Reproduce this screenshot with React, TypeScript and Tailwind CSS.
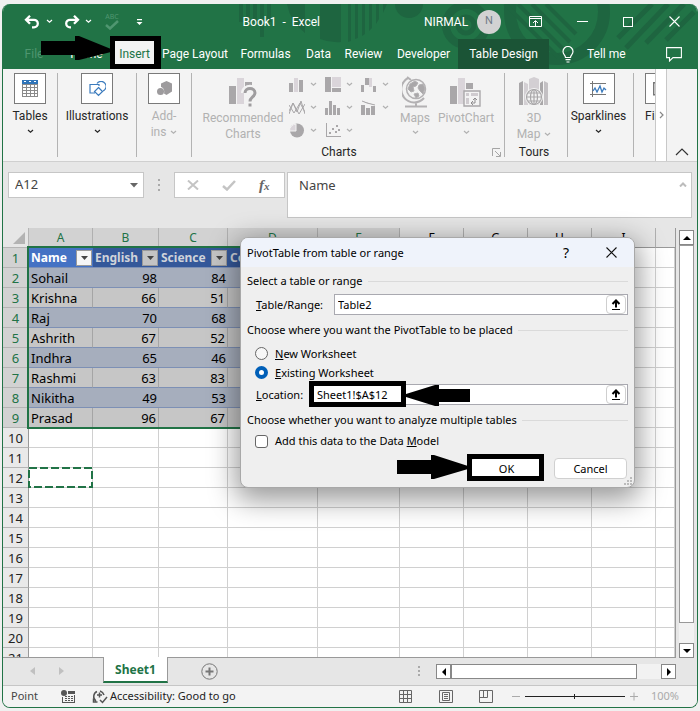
import React from "react";

const UI = "font-['Roboto','Noto_Sans',sans-serif]";

function Chevron({ className = "" }: { className?: string }) {
  return (
    <svg width="7" height="5" viewBox="0 0 7 5" className={className} fill="none" stroke="currentColor" strokeWidth="1.2">
      <path d="M1 1l2.500 2.300L6 1" />
    </svg>
  );
}

function TitlePattern() {
  return (
    <svg className="absolute right-0 top-0 h-[65px] w-[460px]" viewBox="237 4 460 65" fill="#1e6540">
      <path d="M239 4h4v18h-4zM246 4h4v18h-4zM253 4h4v18h-4zM260 4h4v33h-4zM267 4h4v18h-4z" />
      <path d="M287 4h18v29a47 47 0 0 1-18-29zM320 4h21v38a47 47 0 0 1-21-3z" />
      <path d="M348 4h3v37l-3 1zM355 4h3v34l-3 1zM362 4h3v30l-3 2zM369 4h3v24l-3 3zM376 4h3v15l-3 5zM383 4h4l-4 9z" />
      <path d="M395 4h28a14 14 0 0 1-28 0z" />
      <g fill="none" stroke="#1e6540">
        <circle cx="466" cy="25" r="20" strokeWidth="8" />
        <circle cx="466" cy="25" r="8" strokeWidth="5" />
        <circle cx="557" cy="12" r="47" strokeWidth="12" />
        <path d="M505 4l53 53M518 4l46 46M532 4l38 38M546 4l30 30" strokeWidth="4" />
        <path d="M652 4l-34 34M668 4l-42 44M684 4l-38 39M694 12l-28 28" strokeWidth="5" />
      </g>
    </svg>
  );
}

function TitleBar() {
  return (
    <div className="relative flex h-[35px] items-center text-white">
      <button aria-label="Undo" className="ml-[21px] w-4">
        <svg width="16" height="14" viewBox="0 0 16 14" fill="none" stroke="currentColor" strokeWidth="2.300">
          <path d="M6 .800L2 4.800l4 4M2 4.800h8a3.800 3.800 0 0 1 0 7.600H8" />
        </svg>
      </button>
      <button aria-label="Undo options" className="ml-[6px]"><Chevron /></button>
      <button aria-label="Redo" className="ml-[11px] w-4">
        <svg width="16" height="14" viewBox="0 0 16 14" fill="none" stroke="currentColor" strokeWidth="2.300">
          <path d="M10 .800l4 4-4 4M14 4.800H6a3.800 3.800 0 0 0 0 7.600h1" />
        </svg>
      </button>
      <button aria-label="Redo options" className="ml-[5px]"><Chevron /></button>
      <button aria-label="Spelling" className="ml-[13px] flex w-[14px] flex-col items-center text-[#4f9670]">
        <span className="text-[7px] leading-[7px]">ABC</span>
        <svg width="14" height="10" viewBox="0 0 14 10" fill="none" stroke="currentColor" strokeWidth="2.500"><path d="M1 5l4 3.500L13 1" /></svg>
      </button>
      <button aria-label="Customize toolbar" className="ml-[17px]">
        <svg width="7" height="8" viewBox="0 0 7 8" fill="currentColor"><path d="M1 1h5v1.200H1zM.500 4h6l-3 3z" /></svg>
      </button>
      <div className={`ml-auto mr-[104px] whitespace-pre text-xs ${UI}`}>Book1  -  Excel</div>
      <div className={`w-[44px] text-xs ${UI}`}>NIRMAL</div>
      <div className={`ml-[9px] flex size-6 items-center justify-center rounded-full bg-[#d2d2d2] text-[11px] text-[#707a86] ${UI}`}>N</div>
      <button aria-label="Ribbon display options" className="ml-7">
        <svg width="13" height="11" viewBox="0 0 13 11" fill="none" stroke="currentColor"><path d="M.500.500h12v10H.500zM.500 2.500h12M6.500 10V5M4 7l2.500-2.500L9 7" /></svg>
      </button>
      <button aria-label="Minimize" className="ml-[35px] h-3 w-[11px]"><span className="block h-px w-full bg-white" /></button>
      <button aria-label="Maximize" className="ml-[35px] size-[10px] border border-white" />
      <button aria-label="Close" className="ml-9 mr-[17px]">
        <svg width="11" height="11" viewBox="0 0 11 11" stroke="currentColor" strokeWidth="1.100"><path d="M.500.500l10 10M10.500.500l-10 10" /></svg>
      </button>
    </div>
  );
}

function Tabs() {
  const tab = "h-full shrink-0 text-center whitespace-nowrap";
  return (
    <nav className={`relative flex h-[30px] items-center text-xs text-white ${UI}`}>
      <button className={`${tab} ml-3 w-[38px] text-[#4f9670]`}>File</button>
      <button className={`${tab} w-[60px] pl-[7px]`}>Home</button>
      <div className="h-full w-[46px] bg-black pb-[3px] pl-[2px]">
        <button className="h-full w-[39px] bg-[#f3f3f3] pt-[2px] text-[#217346]">Insert</button>
      </div>
      <button className={`${tab} w-[72px]`}>Page Layout</button>
      <button className={`${tab} w-[69px]`}>Formulas</button>
      <button className={`${tab} w-[37px]`}>Data</button>
      <button className={`${tab} w-[53px]`}>Review</button>
      <button className={`${tab} w-[67px]`}>Developer</button>
      <button className={`${tab} ml-px w-[91px] bg-[#1b5436]`}>Table Design</button>
      <button className="ml-[13px] flex h-full items-center gap-[13px]">
        <svg width="12" height="17" viewBox="0 0 12 17" fill="none" stroke="currentColor" strokeWidth="1.200">
          <path d="M3.500 11.500C3.500 9 1 8.500 1 5.500a5 5 0 0 1 10 0c0 3-2.500 3.500-2.500 6zM3.500 13.700h5M4.500 16h3" />
        </svg>
        Tell me
      </button>
      <button aria-label="Comments" className="ml-auto mr-[15px]">
        <svg width="16" height="15" viewBox="0 0 16 15" fill="none" stroke="currentColor" strokeWidth="1.100"><path d="M.600.600h14.800v10H7L3.500 14v-3.400H.600z" /></svg>
      </button>
    </nav>
  );
}

const boxed = "flex h-[31px] w-8 items-center justify-center border border-[#7a7a7a] bg-white";
const group = "my-1 h-[84px] shrink-0 border-r border-[#b3b3b3]";

function SmallChart({ name, dark, light, children }: { name: string; dark?: string; light?: string; children?: React.ReactNode }) {
  return (
    <button aria-label={name} disabled className="flex h-[23px] w-9 items-center gap-[5px]">
      <svg width="16" height="15" viewBox="0 0 16 15" fill="#a9a7a9" className="shrink-0">
        {light && <path d={light} fill="#dad5da" />}
        {dark && <path d={dark} />}
        {children}
      </svg>
      <Chevron className="shrink-0" />
    </button>
  );
}

function Ribbon() {
  const label = "leading-4";
  return (
    <div className={`flex h-[93px] border-b border-[#cfcfcf] bg-[#f3f3f3] text-xs text-[#262626] ${UI}`}>
      <div className="flex min-w-0 flex-1 overflow-hidden">
        <div className={`${group} w-[55px]`}>
          <button className="flex w-full flex-col items-center">
            <span className={boxed}>
              <svg width="16" height="17" viewBox="0 0 16 17"><path d="M0 0h16v17H0z" fill="#8a8a8a" /><path d="M0 0h16v4H0z" fill="#2f74b8" /><path d="M2 1h2v1H2zM7 1h2v1H7zM12 1h2v1h-2z" fill="#fff" /><path d="M1 5h3v2H1zM5 5h3v2H5zM9 5h3v2H9zM13 5h2v2h-2zM1 8h3v2H1zM5 8h3v2H5zM9 8h3v2H9zM13 8h2v2h-2zM1 11h3v2H1zM5 11h3v2H5zM9 11h3v2H9zM13 11h2v2h-2zM1 14h3v2H1zM5 14h3v2H5zM9 14h3v2H9zM13 14h2v2h-2z" fill="#fff" /></svg>
            </span>
            <span className={`mt-[4px] ${label}`}>Tables</span>
            <Chevron className="mt-[5px]" />
          </button>
        </div>
        <div className={`${group} w-[79px]`}>
          <button className="flex w-full flex-col items-center">
            <span className={boxed}>
              <svg width="17" height="16" viewBox="0 0 17 16" fill="none" stroke="#3b7bbd" strokeWidth="1.200"><path d="M6 12H1V3.500h9V5M8 2.500A5 5 0 1 1 14 10M9.500 6.500l4 4-4 4-4-4z" /></svg>
            </span>
            <span className={`mt-[4px] ${label}`}>Illustrations</span>
            <Chevron className="mt-[5px]" />
          </button>
        </div>
        <div className={`${group} w-[55px]`}>
          <button disabled className="flex w-full flex-col items-center text-[#b1b1b1]">
            <span className={boxed}>
              <svg width="15" height="15" viewBox="0 0 15 15" fill="#9d9b9d"><path d="M9.500 0L15 2.500v8L9.500 14 7 12.500C8 9 6 6.500 4 6V2.500z" /><circle cx="3.500" cy="10.500" r="3.500" /></svg>
            </span>
            <span className={`mt-[4px] ${label}`}>Add-</span>
            <span className={`flex items-center gap-1 ${label}`}>ins <Chevron /></span>
          </button>
        </div>
        <div className={`${group} w-[313px]`}>
          <div className="flex h-[74px] pl-[9px] text-[#b1b1b1]">
            <button disabled className="flex w-[84px] flex-col items-center pt-1">
              <svg width="28" height="30" viewBox="0 0 28 30"><path d="M0 9h7v18H0zM16 5h7v6h-7z" fill="#a9a7a9" /><path d="M8 1h7v26H8z" fill="#dad5da" /><path d="M15 16c0-7 12-7 12 0 0 4-6 4-6 9M19.500 27.500h3" stroke="#f3f3f3" strokeWidth="6" fill="none" /><path d="M16 16c0-6 10-6 10 0 0 4-5 4-5 8.500M19.500 28h3" stroke="#9f9d9f" strokeWidth="3" fill="none" /></svg>
              <span className={`mt-[3px] ${label}`}>Recommended</span>
              <span className={label}>Charts</span>
            </button>
            <div className="ml-[4px] grid w-[108px] grid-cols-3 content-start">
              <SmallChart name="Column chart" dark="M0 6h4v9H0zM10 3h4v12h-4z" light="M5 1h4v14H5z" />
              <SmallChart name="Hierarchy chart" dark="M0 0h6v15H0zM7 11h9v4H7z" light="M7 0h9v10H7z" />
              <SmallChart name="Waterfall chart" dark="M0 8h3v7H0zM4 1h4v7H4zM12 9h3v6h-3z" light="M8 1h3v9H8z" />
              <SmallChart name="Line chart"><path d="M0 14L4 3l4 9 4-11 4 13M0 5l5 8 6-10 5 9M0 11l4-8 6 11 6-10" fill="none" stroke="#a9a7a9" /></SmallChart>
              <SmallChart name="Statistic chart" dark="M0 8h3v7H0zM4 1h3v14H4zM8 5h3v10H8zM12 8h3v7h-3z" />
              <SmallChart name="Combo chart" dark="M0 5h4v10H0zM5 8h4v7H5zM10 6h4v9h-4z"><path d="M1 1l5 2 8 2" stroke="#a9a7a9" /></SmallChart>
              <SmallChart name="Pie chart"><circle cx="8" cy="7.500" r="7" /><path d="M7 8V1a7 7 0 0 0-6.500 7z" fill="#dad5da" stroke="#f3f3f3" /></SmallChart>
              <SmallChart name="Scatter chart" dark="M1 0h1v13h14v1H1zM4 9h2v2H4zM7 5h2v2H7zM10 8h2v2h-2zM13 6h2v2h-2zM11 2h2v2h-2z" />
            </div>
            <button disabled className="flex w-9 flex-col items-center pt-[3px]">
              <svg width="26" height="32" viewBox="0 0 26 32" fill="none" stroke="#b3b1b3"><circle cx="14" cy="13" r="9.500" strokeWidth="1.500" /><path d="M8 8l5-3 3 2-2 3-3 1 1 4-3 1-3-3zM17 9l4-1 2 4-2 6-3-3-2-3zM12 18l4-1 1 3-3 2z" fill="#a9a7a9" /><path d="M6 2a13 13 0 1 0 16 20M5 1l4 3M14 26v4M3 30.500h22" strokeWidth="2" /></svg>
              <span className={`mt-[2px] ${label}`}>Maps</span>
              <Chevron className="mt-1" />
            </button>
            <button disabled className="ml-[4px] flex w-[58px] flex-col items-center pt-1">
              <svg width="34" height="30" viewBox="0 0 34 30"><path d="M1 9h7v18H1zM17 6h7v6h-7z" fill="#a9a7a9" /><path d="M9 1h7v26H9z" fill="#dad5da" /><path d="M15 14h16v15H15z" fill="#f3f3f3" stroke="#a9a7a9" strokeWidth="1.400" /><path d="M17 16h3v3h-3zM22 16h7v3h-7zM17 21h3v6h-3z" fill="#cfcbcf" /><path d="M22 26h4v-5M24 23l2-2 2 2M24 24l-2 2 2 2" fill="none" stroke="#8f8d8f" /></svg>
              <span className={`mt-[3px] ${label}`}>PivotChart</span>
              <Chevron className="mt-1" />
            </button>
          </div>
          <div className="flex h-[10px] items-center">
            <span className="flex-1 text-center leading-[14px]">Charts</span>
            <button aria-label="Charts dialog" className="w-[18px] pl-[6px]">
              <svg width="9" height="9" viewBox="0 0 9 9" fill="none" stroke="#a5a5a5"><path d="M.500 8V.500H8M3 3l5 5M8.500 4v4.500H4" /></svg>
            </button>
          </div>
        </div>
        <div className={`${group} w-[63px] pr-[4px]`}>
          <button disabled className="flex h-[74px] w-full flex-col items-center pt-1 text-[#b1b1b1]">
            <svg width="30" height="30" viewBox="0 0 30 30"><path d="M0 6l4-2v24H0zM21 6l3-2v24h-3z" fill="#a9a7a9" /><path d="M5 5l4 2v21H5zM10 2l5-2 5 2v26H10z" fill="#d3cfd3" /><path d="M25 4l4 2v22h-4z" fill="#c3c0c3" /><circle cx="15" cy="20" r="9" fill="#f3f3f3" /><g fill="none" stroke="#a9a7a9" strokeWidth="1.200"><circle cx="15" cy="20" r="7.500" /><ellipse cx="15" cy="20" rx="3.500" ry="7.500" /><path d="M7.500 20h15M9 16h12M9 24h12M15 12.500v15" /></g></svg>
            <span className={`mt-[3px] ${label}`}>3D</span>
            <span className={`flex items-center gap-1 ${label}`}>Map <Chevron /></span>
          </button>
          <div className="flex h-[10px] items-center justify-center leading-[14px]">Tours</div>
        </div>
        <div className={`${group} w-[66px] pr-[4px]`}>
          <button className="flex w-full flex-col items-center">
            <span className={boxed}>
              <svg width="17" height="16" viewBox="0 0 17 16" fill="none"><path d="M0 2.500h16M0 13.500h16M2.500 0v16" stroke="#777" /><path d="M3 10l2-3 2 4 3-6 2 6 2-4 2 2" stroke="#3b7bbd" strokeWidth="1.300" /></svg>
            </span>
            <span className={`mt-[4px] ${label}`}>Sparklines</span>
            <Chevron className="mt-[5px]" />
          </button>
        </div>
        <div className="my-1 w-12 shrink-0 pl-[11px]">
          <button className="flex flex-col items-start">
            <span className={`${boxed} justify-start pl-[7px]`}>
              <svg width="16" height="14" viewBox="0 0 16 14" fill="none" stroke="#777" strokeWidth="1.500"><path d="M.700.700h14v12H.700z" /></svg>
            </span>
            <span className={`mt-[4px] ${label}`}>Filters</span>
          </button>
        </div>
      </div>
      <button aria-label="Scroll ribbon" className="flex w-3 items-center justify-center border-x border-[#c8c8c8] bg-white text-[#888]">
        <svg width="5" height="8" viewBox="0 0 5 8" fill="none" stroke="currentColor" strokeWidth="1.200"><path d="M1 1l3 3-3 3" /></svg>
      </button>
      <button aria-label="Collapse ribbon" className="flex w-[30px] items-end justify-center pb-[5px]">
        <svg width="14" height="8" viewBox="0 0 14 8" fill="none" stroke="#333" strokeWidth="1.200"><path d="M1 7l6-6 6 6" /></svg>
      </button>
    </div>
  );
}

function FormulaBar() {
  return (
    <div className="flex h-[66px] items-start pl-[5px] pr-[5px] pt-[10px] text-[13px] text-[#444] font-['Noto_Sans',sans-serif]">
      <div className="flex h-[26px] w-[136px] items-center border border-[#c6c6c6] bg-white pr-[5px]">
        <input aria-label="Name Box" defaultValue="A12" className="min-w-0 flex-1 bg-transparent pl-[6px] outline-none" />
        <button aria-label="Name list"><svg width="8" height="5" viewBox="0 0 8 5" fill="#666"><path d="M0 0h8L4 4.500z" /></svg></button>
      </div>
      <div className="ml-[14px] flex h-[26px] w-[2px] flex-col justify-center gap-[3px]">
        <i className="size-[2px] bg-[#aaa]" /><i className="size-[2px] bg-[#aaa]" /><i className="size-[2px] bg-[#aaa]" />
      </div>
      <div className="ml-[14px] flex h-[26px] w-[111px] items-center border border-[#c6c6c6] bg-white">
        <button aria-label="Cancel entry" className="ml-3"><svg width="12" height="10" viewBox="0 0 12 10" stroke="#c4c4c4" strokeWidth="2"><path d="M1 .500l10 9M11 .500l-10 9" /></svg></button>
        <button aria-label="Enter" className="ml-[23px]"><svg width="14" height="11" viewBox="0 0 14 11" fill="none" stroke="#c4c4c4" strokeWidth="2.500"><path d="M1 6l4 3.500L13 1" /></svg></button>
        <button aria-label="Insert function" className="ml-[23px] font-['Liberation_Serif',serif] text-[15px] font-bold italic leading-5 text-[#666]">f<span className="text-[11px]">x</span></button>
      </div>
      <div className="ml-[2px] flex h-[46px] min-w-0 flex-1 border border-[#c6c6c6] bg-white">
        <textarea aria-label="Formula Bar" defaultValue="Name" className="min-w-0 flex-1 resize-none bg-transparent pl-[11px] pt-[3px] leading-[18px] outline-none" />
        <svg width="8" height="5" viewBox="0 0 8 5" fill="none" stroke="#bcbcbc" strokeWidth="2" className="mr-1 mt-[9px]"><path d="M1 4.500l3-3 3 3" /></svg>
      </div>
    </div>
  );
}

const columns = ["A", "B", "C", "D", "E", "F", "G", "H", "I", ""];
const records: [string, number, number][] = [
  ["Sohail", 98, 84], ["Krishna", 66, 51], ["Raj", 70, 68], ["Ashrith", 67, 52],
  ["Indhra", 65, 46], ["Rashmi", 63, 83], ["Nikitha", 49, 53], ["Prasad", 96, 67],
];
const fields = ["Name", "English", "Science", "Co", ""];

function Cell({ row, col }: { row: number; col: number }) {
  const base = "h-5 overflow-hidden whitespace-nowrap border-b p-0 leading-[18px]";
  if (col < 5 && row === 1) {
    return (
      <td className={`${base} border-[#7d90b5] ${col === 0 ? "bg-[#4472c4] text-white" : "bg-[#34589a] text-[#cfd3da]"}`}>
        <div className="flex items-center justify-between pl-[2px] pr-px pt-px text-xs font-bold">
          <span>{fields[col]}</span>
          <button aria-label={`Filter column ${columns[col]}`} className={`flex size-4 shrink-0 items-center justify-center border border-[#9a9a9a] ${col === 0 ? "bg-[#f6f6f6]" : "bg-[#c4c4c4]"}`}>
            <svg width="7" height="4" viewBox="0 0 7 4" fill="#444"><path d="M0 0h7L3.500 4z" /></svg>
          </button>
        </div>
      </td>
    );
  }
  if (col < 5 && row <= 9) {
    const banded = row % 2 === 0;
    const value = records[row - 2][col];
    return (
      <td className={`${base} px-[2px] pt-px ${col > 0 ? "text-right" : ""} ${banded ? "border-[#7d90b5] bg-[#a6aebd]" : "border-r border-b-[#7d90b5] border-r-[#a5a5a5] bg-[#c6c6c6]"}`}>{value}</td>
    );
  }
  return <td className={`${base} border-r border-[#d0d0d0] bg-white`} />;
}

function Sheet() {
  const rows = Array.from({ length: 21 }, (_, i) => i + 1);
  return (
    <div className="flex min-h-0 flex-1 pr-[3px]">
      <div className="relative min-w-0 flex-1 overflow-hidden border-b border-r border-[#999]">
        <table className="w-full table-fixed border-separate border-spacing-0 text-[13px] text-black font-['Noto_Sans',sans-serif]">
          <colgroup>
            <col className="w-[26px]" /><col className="w-[64px]" /><col className="w-[66px]" /><col className="w-[69px]" /><col className="w-[90px]" /><col className="w-[82px]" /><col className="w-[64px]" /><col className="w-[64px]" /><col className="w-[64px]" /><col className="w-[64px]" /><col />
          </colgroup>
          <thead>
            <tr>
              <th className="h-5 border-b border-r border-[#b5b5b5] bg-[#e6e6e6] p-0">
                <svg width="12" height="12" viewBox="0 0 12 12" fill="#b3b3b3" className="ml-auto mr-[3px]"><path d="M12 0v12H0z" /></svg>
              </th>
              {columns.map((c, i) => (
                <th key={i} className={`h-5 border-b border-b-[#999] border-r-[#b0b0b0] p-0 text-[12px] font-normal leading-[18px] ${i < 9 ? "border-r" : ""} ${i < 5 ? "bg-[#d2d2d2] text-[#217346]" : "bg-[#e6e6e6]"}`}>{c}</th>
              ))}
            </tr>
          </thead>
          <tbody>
            {rows.map((r) => (
              <tr key={r}>
                <th className={`h-5 border-b border-r border-b-[#b5b5b5] border-r-[#999] p-0 pt-px font-normal leading-[18px] ${r < 10 ? "bg-[#d2d2d2] text-[#217346]" : "bg-[#e9e9e9] text-[#222]"}`}>{r}</th>
                {columns.map((_, c) => <Cell key={c} row={r} col={c} />)}
              </tr>
            ))}
          </tbody>
        </table>
        <div className="absolute left-6 top-[18px] h-[183px] w-[374px] border-2 border-[#217346]" />
        <svg className="absolute left-[25px] top-[239px]" width="66" height="22" fill="none" stroke="#217346" strokeWidth="2" strokeDasharray="8 3"><path d="M1 1h63v19H1z" /></svg>
      </div>
      <div className="ml-[3px] mt-[2px] flex w-[15px] flex-col bg-[#f2f2f2]">
        <button aria-label="Scroll up" className="flex h-[15px] items-center justify-center border border-[#888] bg-white"><svg width="8" height="4" viewBox="0 0 8 4"><path d="M0 4h8L4 0z" /></svg></button>
        <div className="mb-5 flex-1 border border-[#999] bg-white" />
        <button aria-label="Scroll down" className="flex h-[15px] items-center justify-center border border-[#888] bg-white"><svg width="8" height="4" viewBox="0 0 8 4"><path d="M0 0h8L4 4z" /></svg></button>
      </div>
    </div>
  );
}

function SheetTabs() {
  return (
    <div className="flex h-[27px] items-start pr-[21px] font-['Noto_Sans',sans-serif]">
      <button aria-label="Previous sheet" className="ml-[27px] mt-[9px]"><svg width="5" height="8" viewBox="0 0 5 8" fill="#c0c0c0"><path d="M5 0v8L0 4z" /></svg></button>
      <button aria-label="Next sheet" className="ml-6 mt-[9px]"><svg width="5" height="8" viewBox="0 0 5 8" fill="#c0c0c0"><path d="M0 0v8l5-4z" /></svg></button>
      <button className="z-10 -mt-px ml-[39px] h-[26px] w-[65px] border-x border-b-2 border-x-[#999] border-b-[#217346] bg-white pt-[2px] text-xs font-bold text-[#217346]">Sheet1</button>
      <button aria-label="New sheet" className="ml-[33px] mt-[5px]"><svg width="17" height="17" viewBox="0 0 17 17" fill="none" stroke="#777"><circle cx="8.500" cy="8.500" r="7.700" /><path d="M4.500 8.500h8M8.500 4.500v8" strokeWidth="2" /></svg></button>
      <div className="ml-auto mr-4 mt-2 flex w-[2px] flex-col gap-[2px]"><i className="size-[2px] bg-[#aaa]" /><i className="size-[2px] bg-[#aaa]" /><i className="size-[2px] bg-[#aaa]" /></div>
      <div className="mt-[6px] flex h-[15px] w-[240px] bg-[#f2f2f2]">
        <button aria-label="Scroll left" className="flex w-[15px] items-center justify-center border border-[#888] bg-white"><svg width="4" height="8" viewBox="0 0 4 8"><path d="M4 0v8L0 4z" /></svg></button>
        <div className="mr-6 flex-1 border border-[#888] bg-white" />
        <button aria-label="Scroll right" className="flex w-[15px] items-center justify-center border border-[#888] bg-white"><svg width="4" height="8" viewBox="0 0 4 8"><path d="M0 0v8l4-4z" /></svg></button>
      </div>
    </div>
  );
}

function StatusBar() {
  return (
    <div className="flex h-[22px] items-center border-t border-[#c6c6c6] bg-[#f3f3f3] pl-2 pr-[18px] text-[11px] text-[#444] font-['Noto_Sans',sans-serif]">
      <span className="w-[50px]">Point</span>
      <svg width="14" height="13" viewBox="0 0 14 13" fill="#555"><circle cx="3" cy="3" r="3" /><path d="M7 1h7v3H7zM1 7v6h13V5h-1v7H2V7zM4 6h2v1H4zM7 6h2v1H7zM10 6h2v1h-2zM4 8h2v1H4zM7 8h2v1H7zM10 8h2v1h-2zM4 10h2v1H4zM7 10h2v1H7zM10 10h2v1h-2z" /></svg>
      <button className="ml-[17px] flex items-center gap-[2px] text-[#222]">
        <svg width="16" height="14" viewBox="0 0 16 14" fill="none" stroke="#555" strokeWidth="1.500"><path d="M5 1.500a5.500 5.500 0 0 0-1 9.500M1.500 8.500v3.500h4M8 1a6 6 0 0 1 4 4M5 5h5M7.500 2.500v5M8 10l2.500 2.500L15 7" /></svg>
        Accessibility: Good to go
      </button>
      <button aria-label="Normal view" className="ml-auto"><svg width="13" height="13" viewBox="0 0 13 13" fill="none" stroke="#666"><path d="M.500.500h12v12H.500zM4.500 0v13M8.500 0v13M0 4.500h13M0 8.500h13" /></svg></button>
      <button aria-label="Page layout view" className="ml-[27px]"><svg width="14" height="13" viewBox="0 0 14 13" fill="none" stroke="#666"><path d="M.500.500h13v12H.500zM3.500 2.500h7v8h-7zM5 4.500h4M5 6.500h4M5 8.500h4" /></svg></button>
      <button aria-label="Page break preview" className="ml-[26px]"><svg width="14" height="13" viewBox="0 0 14 13" fill="none" stroke="#666"><path d="M.500.500h13v12H.500zM4.500 0v7.500M8.500 0v7.500M0 7.500h8.500" /></svg></button>
      <button aria-label="Zoom out" className="ml-[19px] h-px w-2 bg-[#aaa]" />
      <input type="range" aria-label="Zoom" defaultValue={50} className="ml-[5px] h-4 w-[100px] appearance-none bg-transparent [&::-webkit-slider-runnable-track]:h-px [&::-webkit-slider-runnable-track]:bg-[#222] [&::-webkit-slider-thumb]:-mt-[2px] [&::-webkit-slider-thumb]:h-[5px] [&::-webkit-slider-thumb]:w-px [&::-webkit-slider-thumb]:appearance-none [&::-webkit-slider-thumb]:bg-[#222]" />
      <button aria-label="Zoom in" className="ml-[5px]"><svg width="8" height="9" viewBox="0 0 8 9" stroke="#aaa"><path d="M0 4.500h8M4 .500v8" /></svg></button>
      <span className="ml-[13px] text-[#aaa]">100%</span>
    </div>
  );
}

function Heading({ children }: { children: React.ReactNode }) {
  return <legend className="flex h-4 w-full items-center gap-[5px] whitespace-nowrap">{children}<span className="h-px flex-1 bg-[#dadada]" /></legend>;
}

function PickRange({ label }: { label: string }) {
  return (
    <button aria-label={label} className="mr-px flex w-5 shrink-0 items-center justify-center rounded border border-[#cfcfcf] bg-white">
      <svg width="10" height="11" viewBox="0 0 10 11" fill="none" stroke="#000"><path d="M5 8.500V2M1.500 5L5 1.500 8.500 5" strokeWidth="2" /><path d="M1 10.500h8" /></svg>
    </button>
  );
}

function PivotDialog() {
  return (
    <div role="dialog" aria-labelledby="pivot-title" className="absolute left-[240px] top-[237px] w-[395px] overflow-hidden rounded-lg border border-[#a8a8a8] bg-[#efefef] text-[11px] leading-4 text-black font-['Noto_Sans',sans-serif] shadow-[0_8px_28px_4px_rgba(0,0,0,0.4)]">
      <div className="flex h-[29px] items-center bg-[#eff3fb] pl-[6px] pr-[17px]">
        <h1 id="pivot-title">PivotTable from table or range</h1>
        <button aria-label="Help" className="ml-auto text-sm">?</button>
        <button aria-label="Close dialog" className="ml-[37px]"><svg width="11" height="11" viewBox="0 0 11 11" stroke="#111" strokeWidth="1.100"><path d="M.500.500l10 10M10.500.500l-10 10" /></svg></button>
      </div>
      <div className="pb-2 pl-[6px] pr-[6px] pt-[6px]">
        <fieldset>
          <Heading>Select a table or range</Heading>
          <div className="mt-[5px] flex h-[21px] items-center pl-[9px]">
            <label htmlFor="range" className="w-[78px]"><u>T</u>able/Range:</label>
            <div className="flex h-full min-w-0 flex-1 border border-[#a9a9b0] bg-white">
              <input id="range" defaultValue="Table2" className="min-w-0 flex-1 pl-[3px] outline-none" />
              <PickRange label="Pick table range" />
            </div>
          </div>
        </fieldset>
        <fieldset className="mt-[7px]">
          <Heading>Choose where you want the PivotTable to be placed</Heading>
          <div className="mt-[6px] pl-[8px]">
            <label className="flex h-[19px] items-center gap-[7px]"><input type="radio" name="place" className="size-[13px] appearance-none rounded-full border border-[#666] bg-[#f7f7f7] checked:border-4 checked:border-[#005fb8] checked:bg-white" /><span><u>N</u>ew Worksheet</span></label>
            <label className="flex h-[19px] items-center gap-[7px]"><input type="radio" name="place" defaultChecked className="size-[13px] appearance-none rounded-full border border-[#666] bg-[#f7f7f7] checked:border-4 checked:border-[#005fb8] checked:bg-white" /><span><u>E</u>xisting Worksheet</span></label>
          </div>
          <div className="mt-[2px] flex h-[21px] items-center pl-[9px]">
            <label htmlFor="location" className="w-[54px]"><u>L</u>ocation:</label>
            <div className="flex h-full min-w-0 flex-1 border border-[#a9a9b0] bg-white">
              <input id="location" defaultValue="Sheet1!$A$12" className="min-w-0 flex-1 pl-[6px] outline-none" />
              <PickRange label="Pick location" />
            </div>
          </div>
        </fieldset>
        <fieldset className="mt-[7px]">
          <Heading>Choose whether you want to analyze multiple tables</Heading>
          <label className="mt-[5px] flex items-center gap-[7px] pl-[8px]"><input type="checkbox" className="size-[13px] appearance-none rounded-[3px] border border-[#666] bg-white" /><span>Add this data to the Data <u>M</u>odel</span></label>
        </fieldset>
        <div className="mt-[9px] flex justify-end gap-[11px] pr-px">
          <button className="h-[21px] w-[73px] rounded border border-[#d0d0d0] bg-white">OK</button>
          <button className="h-[21px] w-[73px] rounded border border-[#d0d0d0] bg-white">Cancel</button>
        </div>
      </div>
      <svg className="absolute bottom-[2px] right-[2px]" width="8" height="8" viewBox="0 0 8 8" fill="#bbb"><path d="M6 0h2v2H6zM6 3h2v2H6zM3 3h2v2H3zM6 6h2v2H6zM3 6h2v2H3zM0 6h2v2H0z" /></svg>
    </div>
  );
}

function Annotations() {
  return (
    <div aria-hidden="true" className="pointer-events-none absolute left-0 top-0">
      <div className="absolute left-[110px] top-9 h-[33px] w-[51px] border-5 border-black" />
      <div className="absolute left-[309px] top-[381px] h-[26px] w-[97px] border-5 border-black" />
      <div className="absolute left-[467px] top-[454px] h-[27px] w-[77px] border-5 border-black" />
      <svg className="absolute left-0 top-0" width="560" height="500" fill="#000">
        <path d="M41 41h34v-5h4l32 13v3l-32 8h-4v-5H41z" />
        <path d="M470 389h-31v-4h-4l-29 9v3l29 9h4v-4h31z" />
        <path d="M397 460h34v-5h3l34 11v3l-34 10h-3v-5h-34z" />
      </svg>
    </div>
  );
}

export default function App() {
  return (
    <div className="relative h-screen min-h-[600px] overflow-hidden bg-[#f0f0f0] px-[2px] pb-[3px] pt-1">
      <div className="flex h-full flex-col overflow-hidden rounded-lg border-x border-b border-[#217346] bg-[#e6e6e6]">
        <header className="relative bg-[#217346]">
          <TitlePattern />
          <TitleBar />
          <Tabs />
        </header>
        <Ribbon />
        <FormulaBar />
        <Sheet />
        <SheetTabs />
        <StatusBar />
      </div>
      <PivotDialog />
      <Annotations />
    </div>
  );
}
